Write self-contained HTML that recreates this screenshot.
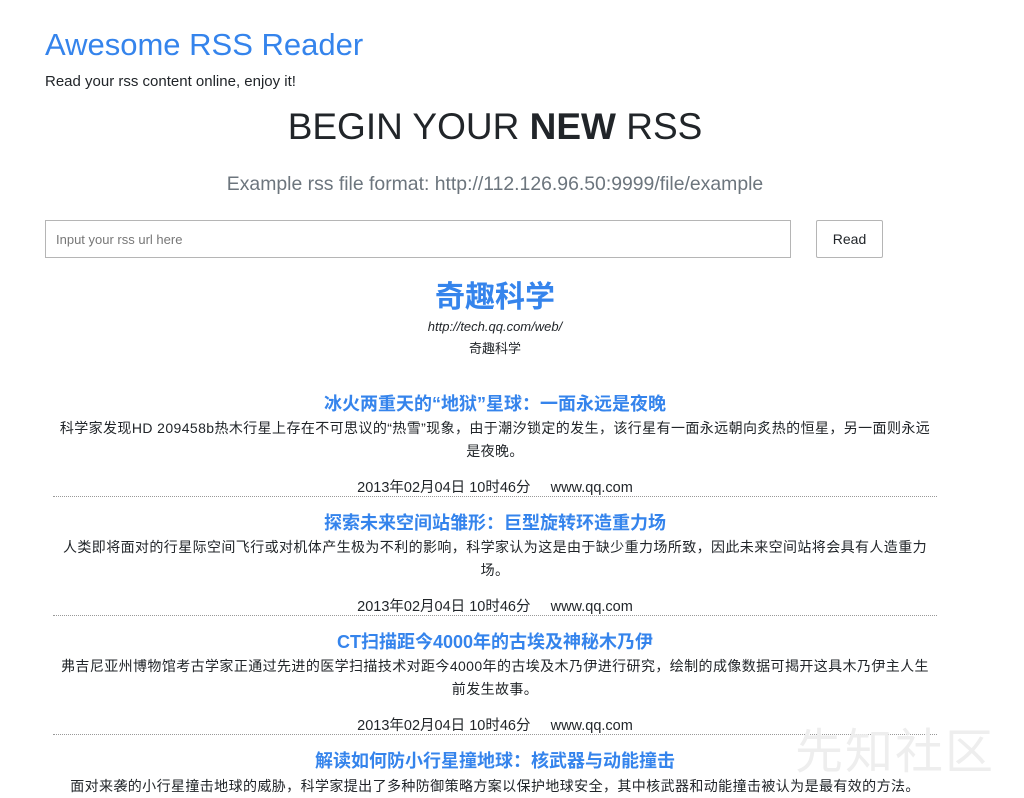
<!DOCTYPE html>
<html><head><meta charset="utf-8"><style>
body{margin:0;width:1024px;height:781px;overflow:hidden;background:#fff;font-family:"Liberation Sans","Noto Sans CJK SC",sans-serif;color:#212529;position:relative}
.a{position:absolute;white-space:nowrap}
.c{position:absolute;left:53px;width:884px;text-align:center}
.t{color:#3584ec;font-size:18px;font-weight:bold}
.d{font-size:14px;line-height:23px;white-space:normal;letter-spacing:0.4px;padding:0 4px;box-sizing:border-box}
.m{font-size:14.5px}
.hr{position:absolute;left:53px;width:884px;border-top:1px dotted #999}
</style></head><body>
<div class="a" style="left:45px;top:27px;font-size:31px;color:#3584ec">Awesome RSS Reader</div>
<div class="a" style="left:45px;top:73px;font-size:15px">Read your rss content online, enjoy it!</div>
<div class="c" style="top:106px;font-size:37px;">BEGIN YOUR <span style="font-weight:700">NEW</span> RSS</div>
<div class="c" style="top:173px;font-size:19.4px;color:#6c757d">Example rss file format: http://112.126.96.50:9999/file/example</div>
<div class="a" style="left:45px;top:220px;width:744px;height:36px;border:1px solid #b5b5b5;"><span style="position:absolute;left:10px;top:11px;font-size:13px;color:#777">Input your rss url here</span></div>
<div class="a" style="left:816px;top:220px;width:65px;height:36px;border:1px solid #b5b5b5;border-radius:2px;text-align:center;line-height:36px;font-size:14px">Read</div>
<div class="c" style="top:272px;font-size:30px;font-weight:bold;color:#3584ec">奇趣科学</div>
<div class="c" style="top:319px;font-size:13px;font-style:italic">http://tech.qq.com/web/</div>
<div class="c" style="top:338px;font-size:13px">奇趣科学</div>

<div class="c t" style="top:390px">冰火两重天的“地狱”星球：一面永远是夜晚</div>
<div class="c d" style="top:417px">科学家发现HD 209458b热木行星上存在不可思议的“热雪”现象，由于潮汐锁定的发生，该行星有一面永远朝向炙热的恒星，另一面则永远是夜晚。</div>
<div class="c m" style="top:476px">2013年02月04日 10时46分 &nbsp;&nbsp;&nbsp; www.qq.com</div>
<div class="hr" style="top:496px"></div>

<div class="c t" style="top:509px">探索未来空间站雏形：巨型旋转环造重力场</div>
<div class="c d" style="top:536px">人类即将面对的行星际空间飞行或对机体产生极为不利的影响，科学家认为这是由于缺少重力场所致，因此未来空间站将会具有人造重力场。</div>
<div class="c m" style="top:595px">2013年02月04日 10时46分 &nbsp;&nbsp;&nbsp; www.qq.com</div>
<div class="hr" style="top:615px"></div>

<div class="c t" style="top:628px">CT扫描距今4000年的古埃及神秘木乃伊</div>
<div class="c d" style="top:655px">弗吉尼亚州博物馆考古学家正通过先进的医学扫描技术对距今4000年的古埃及木乃伊进行研究，绘制的成像数据可揭开这具木乃伊主人生前发生故事。</div>
<div class="c m" style="top:714px">2013年02月04日 10时46分 &nbsp;&nbsp;&nbsp; www.qq.com</div>
<div class="hr" style="top:734px"></div>

<div class="c t" style="top:747px">解读如何防小行星撞地球：核武器与动能撞击</div>
<div class="c d" style="top:775px">面对来袭的小行星撞击地球的威胁，科学家提出了多种防御策略方案以保护地球安全，其中核武器和动能撞击被认为是最有效的方法。</div>
<div class="a" style="left:795px;top:712px;font-size:48px;color:#eee;letter-spacing:2px">先知社区</div>
</body></html>
